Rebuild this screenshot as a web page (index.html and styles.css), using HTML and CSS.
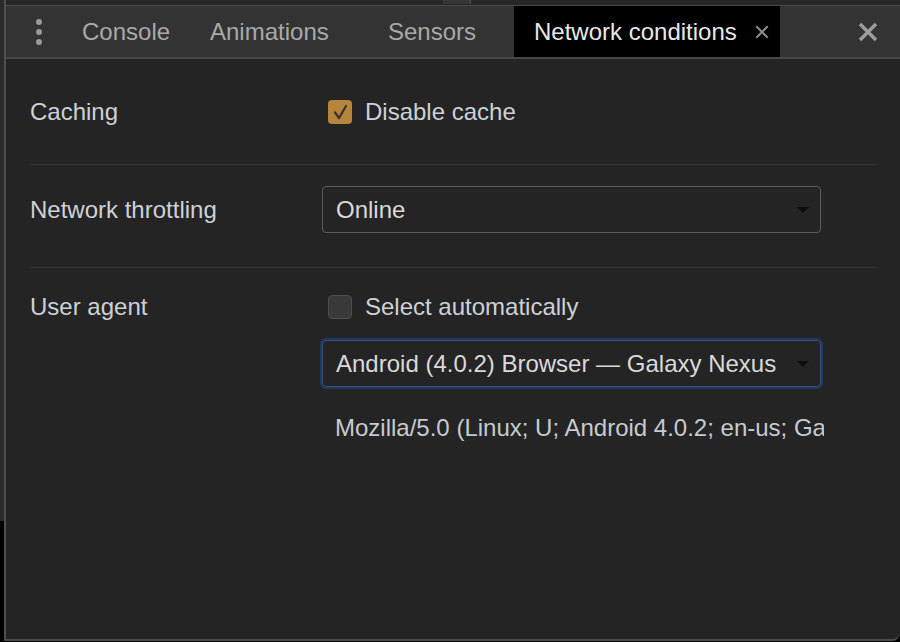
FILE: index.html
```html
<!DOCTYPE html>
<html lang="en">
<head>
<meta charset="utf-8">
<title>Network conditions</title>
<link rel="stylesheet" href="styles.css">
</head>
<body>
<div class="frame">
  <div class="gutter"></div>
  <div class="panel">
    <div class="topstrip">
      <span class="strip-box"></span>
    </div>
    <div class="tabbar">
      <div class="menu" aria-label="More tabs">
        <span class="dot"></span><span class="dot"></span><span class="dot"></span>
      </div>
      <div class="tab tab-console">Console</div>
      <div class="tab tab-anim">Animations</div>
      <div class="tab tab-sensors">Sensors</div>
      <div class="tab tab-active">
        <span>Network conditions</span>
        <svg class="tab-close" width="14" height="14" viewBox="0 0 14 14"><path d="M2 2 L12 12 M12 2 L2 12" stroke="#8c8c8c" stroke-width="2" stroke-linecap="square"/></svg>
      </div>
      <div class="tab-spacer"></div>
      <svg class="drawer-close" width="20" height="20" viewBox="0 0 20 20"><path d="M2 2 L18 18 M18 2 L2 18" stroke="#9c9c9c" stroke-width="3.4"/></svg>
    </div>
    <div class="content">
      <div class="row row-cache">
        <div class="label">Caching</div>
        <div class="controls">
          <label class="check">
            <span class="box box-on">
              <svg width="24" height="24" viewBox="0 0 24 24"><path d="M7 12.5 L11 18 L18 6" fill="none" stroke="#3a3228" stroke-width="2.2" stroke-linejoin="round" stroke-linecap="round"/></svg>
            </span>
            <span>Disable cache</span>
          </label>
        </div>
      </div>
      <div class="row row-throttle">
        <div class="label">Network throttling</div>
        <div class="controls">
          <div class="select">
            <span>Online</span>
            <span class="arrow"></span>
          </div>
        </div>
      </div>
      <div class="row row-ua">
        <div class="label">User agent</div>
        <div class="controls">
          <label class="check">
            <span class="box box-off"></span>
            <span>Select automatically</span>
          </label>
          <div class="select select-focus">
            <span>Android (4.0.2) Browser — Galaxy Nexus</span>
            <span class="arrow"></span>
          </div>
          <div class="ua-string">Mozilla/5.0 (Linux; U; Android 4.0.2; en-us; Galaxy Nexus Build/ICL53F) AppleWebKit/534.30 (KHTML, like Gecko) Version/4.0 Mobile Safari/534.30</div>
        </div>
      </div>
    </div>
  </div>
</div>
</body>
</html>
```

FILE: styles.css
```css
* { box-sizing: border-box; }

html, body {
  margin: 0;
  padding: 0;
  background: #000;
}

body {
  font-family: "Liberation Sans", Arial, sans-serif;
  font-size: 24px;
  width: 900px;
  height: 642px;
  overflow: hidden;
}

.frame {
  display: flex;
  width: 900px;
  height: 642px;
}

.gutter {
  width: 4px;
  flex: none;
  background: linear-gradient(to bottom, #2b2b2b 0, #2b2b2b 521px, #000 521px, #000 100%);
}

.panel {
  flex: 1;
  display: flex;
  flex-direction: column;
  border-left: 2px solid #4f4f4f;
  border-bottom: 2px solid #4a4a4a;
  border-bottom-right-radius: 8px;
  background: #242424;
  height: 641px;
  overflow: hidden;
}

.topstrip {
  height: 6px;
  flex: none;
  background: #272727;
  border-bottom: 1px solid #4b4b4b;
  display: flex;
  padding-left: 437px;
}

.strip-box {
  width: 28px;
  height: 4px;
  background: #363636;
  border-right: 1px solid #4b4b4b;
}

.tabbar {
  height: 53px;
  flex: none;
  display: flex;
  align-items: stretch;
  background: #333333;
  border-bottom: 2px solid #474747;
  color: #a9a9a9;
}

.menu {
  width: 56px;
  flex: none;
  display: flex;
  flex-direction: column;
  justify-content: center;
  gap: 4px;
  padding-left: 30px;
}

.dot {
  width: 6px;
  height: 6px;
  border-radius: 50%;
  background: #9a9a9a;
}

.tab {
  flex: none;
  display: flex;
  align-items: center;
  padding-left: 20px;
  white-space: nowrap;
}

.tab-console { width: 128px; }
.tab-anim { width: 178px; }
.tab-sensors { width: 146px; }

.tab-active {
  width: 266px;
  background: #000;
  color: #e8e8e8;
  justify-content: space-between;
  padding-right: 11px;
}

.tab-close { flex: none; }

.tab-spacer { flex: 1; }

.drawer-close {
  flex: none;
  align-self: center;
  margin-right: 22px;
}

.content {
  padding: 0 24px 0 24px;
  color: #cdd1d7;
}

.row {
  display: grid;
  grid-template-columns: 292px 1fr;
  border-bottom: 1px solid #343434;
  line-height: 28px;
}

.row-ua { border-bottom: none; }

.row-cache { padding: 39px 0 38px; }
.row-throttle { padding: 21px 0 34px; align-items: center; }
.row-ua { padding: 25px 0 0; }

.label {
  white-space: nowrap;
}

.controls {
  display: flex;
  flex-direction: column;
  align-items: flex-start;
}

.check {
  display: flex;
  align-items: center;
  gap: 13px;
  margin-left: 6px;
  height: 28px;
}

.box {
  width: 24px;
  height: 24px;
  border-radius: 4px;
  flex: none;
  display: block;
}

.box svg { display: block; }

.box-on {
  background: #b7843c;
}

.box-off {
  background: #393939;
  border: 1px solid #4e4e4e;
}

.select {
  width: 499px;
  height: 47px;
  border: 1px solid #5b5b5b;
  border-radius: 4px;
  display: flex;
  align-items: center;
  justify-content: space-between;
  padding: 0 11px 0 13px;
  color: #d9d9d9;
  white-space: nowrap;
}

.arrow {
  width: 0;
  height: 0;
  border-left: 6px solid transparent;
  border-right: 6px solid transparent;
  border-top: 6px solid #0d0d0d;
}

.select-focus {
  margin-top: 19px;
  border: 1px solid #3a4f72;
  box-shadow: 0 0 0 2px #1e3866;
  border-radius: 4px;
}

.ua-string {
  margin-top: 27px;
  width: 502px;
  padding-left: 13px;
  overflow: hidden;
  white-space: nowrap;
  color: #c6cbd1;
}
```
